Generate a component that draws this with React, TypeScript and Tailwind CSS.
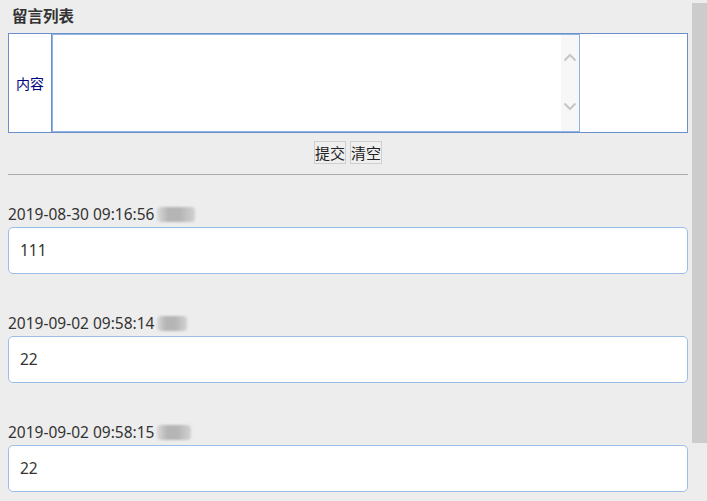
import React from 'react'

const messages = [
    { time: '2019-08-30 09:16:56', content: '111', blob: 'w-[38px]' },
    { time: '2019-09-02 09:58:14', content: '22', blob: 'w-[30px]' },
    { time: '2019-09-02 09:58:15', content: '22', blob: 'w-[34px]' },
]

const font = 'font-["Noto_Sans","Noto_Sans_CJK_SC",sans-serif]'

const Chevron = ({ up }: { up?: boolean }) => (
    <svg width="14" height="9" viewBox="0 0 14 9" fill="none">
        <path
            d={up ? 'M1.5 7.5 L7 2 L12.5 7.5' : 'M1.5 1.5 L7 7 L12.5 1.5'}
            stroke="#c6c6c6"
            strokeWidth="2"
        />
    </svg>
)

const App = () => {
    return (
        <div className={`flex h-[501px] w-[707px] overflow-hidden bg-[#ededed] text-[#333] ${font}`}>
            <section className="flex-1 pl-[8px] pr-[4px]">
                <h2 className="pl-[4px] pt-[5px] h-[33px] text-[15.5px] font-bold leading-[22px] text-[#333]">
                    留言列表
                </h2>

                <div className="flex h-[100px] border border-[#6c8fcb] bg-white">
                    <div className="flex w-[43px] items-center justify-center border-r border-[#6c8fcb] text-[14px] text-[#000080]">
                        内容
                    </div>
                    <div className="flex w-[528px] border border-[#8fb5e6]">
                        <div className="flex-1" />
                        <div className="flex w-[18px] flex-col items-center justify-between bg-[#f7f7f7] pt-[18px] pb-[20px]">
                            <Chevron up />
                            <Chevron />
                        </div>
                    </div>
                </div>

                <div className="flex justify-center gap-[4px] pt-[8px]">
                    <button className="h-[23px] w-[32px] border border-[#cfcfcf] bg-[#efefef] text-[15px] leading-[20px] text-[#222]">
                        提交
                    </button>
                    <button className="h-[23px] w-[32px] border border-[#cfcfcf] bg-[#efefef] text-[15px] leading-[20px] text-[#222]">
                        清空
                    </button>
                </div>

                <div className="mt-[10px] border-t border-[#aaaaaa]" />

                <div className="flex flex-col gap-[39px] pt-[29px]">
                    {messages.map((m, i) => (
                        <div key={i}>
                            <div className="flex h-[20px] items-center text-[15.5px] leading-[20px] text-[#333]">
                                <span>{m.time}</span>
                                <span
                                    className={`ml-[3px] inline-block h-[15px] ${m.blob} rounded-[4px] bg-[linear-gradient(90deg,#dadada_0%,#b5b5b5_30%,#b5b5b5_60%,#d2d2d2_100%)] blur-[1px]`}
                                />
                            </div>
                            <div className="mt-[3px] flex h-[47px] items-center rounded-[5px] border border-[#9dbde9] bg-white px-[11px] text-[15.5px] text-[#333]">
                                {m.content}
                            </div>
                        </div>
                    ))}
                </div>
            </section>

            <div className="flex w-[15px] flex-col">
                <div className="mt-[3px] h-[440px] bg-[#cccccc]" />
            </div>
        </div>
    )
}

export default App
